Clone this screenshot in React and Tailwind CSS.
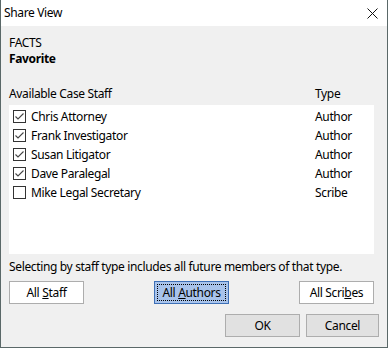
import React from "react";

const staff = [
  { name: "Chris Attorney", type: "Author", checked: true },
  { name: "Frank Investigator", type: "Author", checked: true },
  { name: "Susan Litigator", type: "Author", checked: true },
  { name: "Dave Paralegal", type: "Author", checked: true },
  { name: "Mike Legal Secretary", type: "Scribe", checked: false },
];

function Box({ checked }) {
  return (
    <div className="w-[13px] h-[13px] border border-[#333333] bg-white flex items-center justify-center shrink-0">
      {checked && (
        <svg width="11" height="11" viewBox="0 0 11 11">
          <path d="M1.5 5.5 L4 8 L9.5 2.5" fill="none" stroke="#444" strokeWidth="1.1" />
        </svg>
      )}
    </div>
  );
}

export default function App() {
  return (
    <div
      className="w-[388px] h-[348px] flex flex-col border-l border-r border-b border-[#5a6868] text-[12px] tracking-[-0.35px] text-black bg-[#f0f0f0] overflow-hidden"
      style={{ fontFamily: '"Segoe UI", "Noto Sans", sans-serif' }}
    >
      <div className="h-[26px] bg-white flex items-center justify-between pl-[3px] pr-[9px] shrink-0">
        <span>Share View</span>
        <svg width="11" height="11" viewBox="0 0 11 11">
          <path d="M0.5 0.5 L10.5 10.5 M10.5 0.5 L0.5 10.5" stroke="#111" strokeWidth="1" />
        </svg>
      </div>
      <div className="flex flex-col pl-[8px] pr-[13px]">
        <div className="mt-[9px] leading-[16px]">FACTS</div>
        <div className="leading-[16px] font-bold">Favorite</div>
        <div className="mt-[19px] flex leading-[16px]">
          <span className="flex-1">Available Case Staff</span>
          <span className="w-[59px]">Type</span>
        </div>
        <div className="mt-[3px] h-[149px] bg-white pt-[2px] pl-[4px]">
          {staff.map((s) => (
            <div key={s.name} className="h-[19px] flex items-center">
              <Box checked={s.checked} />
              <span className="ml-[5px] flex-1">{s.name}</span>
              <span className="w-[59px]">{s.type}</span>
            </div>
          ))}
        </div>
        <div className="mt-[5px] leading-[16px]">Selecting by staff type includes all future members of that type.</div>
        <div className="mt-[6px] flex justify-between">
          <button className="w-[75px] h-[23px] bg-white border border-[#adadad] flex items-center justify-center">
            All <span className="underline ml-[3px]">S</span>taff
          </button>
          <button className="w-[75px] h-[23px] bg-[#a8c3eb] border border-[#3d6fb6] p-[2px]">
            <div className="w-full h-full border border-dotted border-black flex items-center justify-center">
              All <span className="underline ml-[3px]">A</span>uthors
            </div>
          </button>
          <button className="w-[75px] h-[23px] bg-white border border-[#adadad] flex items-center justify-center">
            All Scri<span className="underline">b</span>es
          </button>
        </div>
        <div className="mt-[10px] flex justify-end gap-[6px]">
          <button className="w-[75px] h-[23px] bg-[#e1e1e1] border border-[#adadad]">OK</button>
          <button className="w-[73px] h-[23px] bg-[#e1e1e1] border border-[#adadad] mr-[-5px]">Cancel</button>
        </div>
      </div>
    </div>
  );
}
